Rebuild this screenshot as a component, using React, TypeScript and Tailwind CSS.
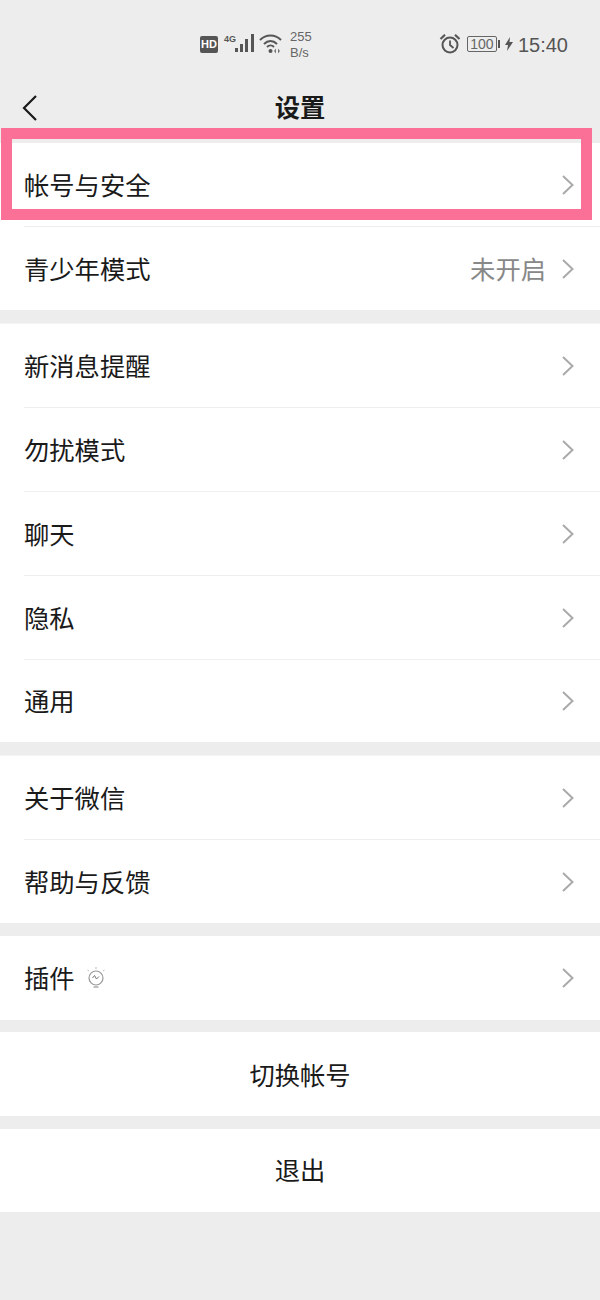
import { ReactNode } from "react";

function Chevron() {
  return (
    <svg width="14" height="22" viewBox="0 0 14 22" fill="none" className="shrink-0">
      <path d="M2 2l9.500 9L2 20" stroke="#aaaaaa" strokeWidth="2" />
    </svg>
  );
}

function Row({
  title,
  value,
  extra,
  divider,
  height = "h-[84px]",
}: {
  title: string;
  value?: string;
  extra?: ReactNode;
  divider?: boolean;
  height?: string;
}) {
  return (
    <div className={`${height} pl-6 bg-white`}>
      <div
        className={`h-full flex items-center pr-[25px] ${divider ? "border-b border-[#eeeeee]" : ""}`}
      >
        <span className="pt-[4px] text-[25.300px] text-[#1a1a1a]">{title}</span>
        {extra}
        <span className="ml-auto mr-[15px] pt-[4px] text-[25.300px] text-[#888888]">{value}</span>
        <Chevron />
      </div>
    </div>
  );
}

function ActionRow({ title, className }: { title: string; className: string }) {
  return (
    <div className={`${className} bg-white flex items-center justify-center text-[25.300px] text-[#1a1a1a]`}>
      {title}
    </div>
  );
}

function StatusBar() {
  return (
    <div className="h-[80px] pt-[8px] pl-[200px] pr-[32px] flex items-center text-[#555555]">
      <div className="w-[18px] h-[17px] rounded-[2px] bg-[#555555] text-white text-[11px] font-bold leading-[17px] text-center">
        HD
      </div>
      <span className="ml-[6px] w-[10px] mb-[10px] text-[9px] font-bold leading-[11px]">4G</span>
      <svg width="20" height="20" viewBox="0 0 20 20">
        <rect x="1" y="14" width="3" height="4" fill="#555555" />
        <rect x="6" y="10" width="3" height="8" fill="#555555" />
        <rect x="11" y="5" width="3" height="13" fill="#555555" />
        <rect x="17" y="0" width="3" height="18" fill="#555555" />
      </svg>
      <svg width="24" height="22" viewBox="0 0 24 22" fill="none" className="ml-[5px]">
        <path d="M1 7c6-6 15-6 21 0" stroke="#555555" strokeWidth="2" />
        <path d="M5 11c4-4 9-4 13 0" stroke="#555555" strokeWidth="2" />
        <path d="M8 14c2-2 5-2 7 0" stroke="#555555" strokeWidth="2" />
        <circle cx="11.500" cy="18" r="2" fill="#555555" />
        <path d="M17 15.500v5l-2-2.500zM19 15.500v5l2-2.500z" fill="#777777" />
      </svg>
      <div className="ml-[7px] mt-[2px] text-[13px] leading-[16px] text-[#666666]">
        255
        <br />
        B/s
      </div>
      <svg width="22" height="22" viewBox="0 0 22 22" fill="none" className="ml-auto">
        <circle cx="11" cy="12" r="7.500" stroke="#555555" strokeWidth="2" />
        <path d="M11 7.500V12l3.500 3" stroke="#555555" strokeWidth="1.800" />
        <path d="M1.500 6L6 1.800M20.500 6L16 1.800" stroke="#555555" strokeWidth="2.200" />
      </svg>
      <div className="ml-[6px] w-[30px] h-[16px] rounded-[2px] border border-[#666666] text-[14px] leading-[14px] text-center text-[#666666]">
        100
      </div>
      <div className="ml-px w-[2px] h-[8px] bg-[#555555]" />
      <svg width="8" height="14" viewBox="0 0 8 14" className="ml-[5px]">
        <path d="M5 0L0 8h3l-1 6 6-9H4.500z" fill="#555555" />
      </svg>
      <span className="ml-[5px] mt-[2px] text-[20px] leading-[24px] text-[#555555]">15:40</span>
    </div>
  );
}

export default function App() {
  return (
    <div className="w-[600px] h-[1300px] relative overflow-hidden bg-[#ededed] font-['Liberation_Sans','Noto_Sans_CJK_SC',sans-serif]">
      <StatusBar />
      <div className="h-[63px] pb-[7px] grid grid-cols-[1fr_auto_1fr] items-center">
        <svg width="18" height="28" viewBox="0 0 18 28" fill="none" className="ml-[21px]">
          <path d="M15 2L3 14l12 12" stroke="#1a1a1a" strokeWidth="2.200" />
        </svg>
        <span className="text-[25.300px] leading-[34px] font-bold text-[#1a1a1a]">设置</span>
      </div>

      <Row title="帐号与安全" divider />
      <Row title="青少年模式" value="未开启" height="h-[83px]" />

      <div className="mt-[13px] border-t border-[#f4f4f4]">
        <Row title="新消息提醒" divider />
        <Row title="勿扰模式" divider />
        <Row title="聊天" divider />
        <Row title="隐私" divider />
        <Row title="通用" height="h-[82px]" />
      </div>

      <div className="mt-[13px] border-t border-[#f4f4f4]">
        <Row title="关于微信" divider />
        <Row title="帮助与反馈" height="h-[83px]" />
      </div>

      <div className="mt-[13px]">
        <Row
          title="插件"
          extra={
            <svg width="18" height="22" viewBox="0 0 18 22" fill="none" className="ml-[12px]">
              <circle cx="9" cy="11" r="7" stroke="#999999" strokeWidth="1.200" />
              <path d="M5.500 11l2-2.500 2 3.500 2.500-2.500" stroke="#777777" strokeWidth="1" />
              <path d="M6.500 20h5" stroke="#aaaaaa" strokeWidth="1.500" />
              <path d="M9 0v2M0.500 3l1.500 1M17.500 3L16 4" stroke="#bbbbbb" strokeWidth="1" />
            </svg>
          }
        />
      </div>

      <div className="mt-[12px]">
        <ActionRow title="切换帐号" className="h-[84px] pt-[6px]" />
      </div>
      <div className="mt-[13px]">
        <ActionRow title="退出" className="h-[83px] pt-[3px]" />
      </div>

      {/* 高亮框 */}
      <div className="absolute left-px top-[128px] w-[591px] h-[92px] border-[11px] border-[#fa7097] pointer-events-none" />
    </div>
  );
}
